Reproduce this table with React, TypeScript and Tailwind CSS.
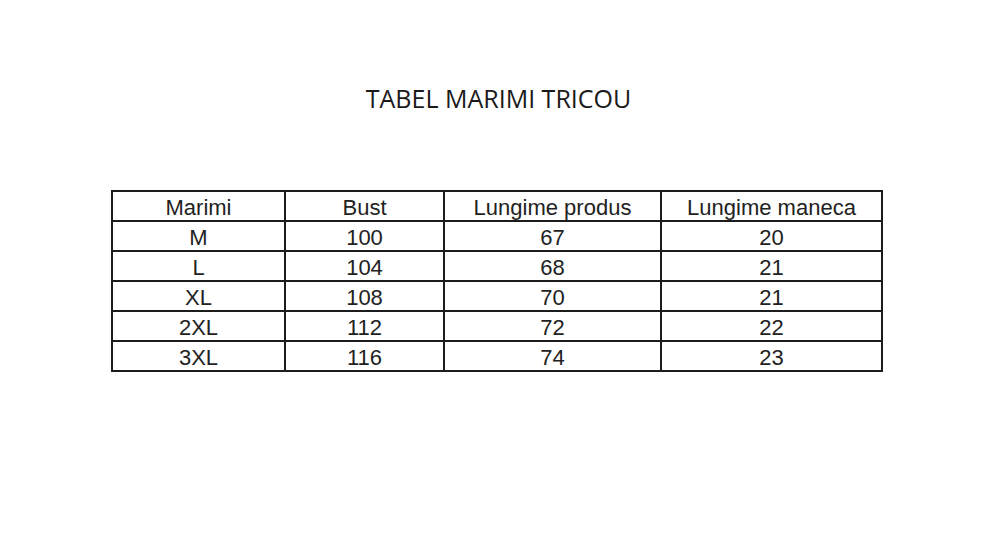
import React from "react";

const headers = ["Marimi", "Bust", "Lungime produs", "Lungime maneca"];
const rows = [
  ["M", "100", "67", "20"],
  ["L", "104", "68", "21"],
  ["XL", "108", "70", "21"],
  ["2XL", "112", "72", "22"],
  ["3XL", "116", "74", "23"],
];

export default function App() {
  const all = [headers, ...rows];
  return (
    <div className="w-[1000px] h-[533px] bg-white flex flex-col">
      <div
        className="h-[26px] mt-[85px] text-center text-[25px] leading-[26px] text-[#1a1a1a] pr-[3px]"
        style={{ fontFamily: '"Open Sans", "Noto Sans", sans-serif' }}
      >
        TABEL MARIMI TRICOU
      </div>
      <div className="mt-[79px] pl-[111px]">
        <div
          className="grid grid-cols-[173px_159px_217px_221px] w-[772px] border-l-2 border-t-2 border-[#1c1c1c] text-[22px] leading-[28px] text-[#222222]"
          style={{ fontFamily: '"Liberation Sans", Arial, sans-serif' }}
        >
          {all.map((r, i) =>
            r.map((c, j) => (
              <div
                key={`${i}-${j}`}
                className="h-[30px] border-r-2 border-b-2 border-[#1c1c1c] flex items-center justify-center pt-[3px]"
              >
                {c}
              </div>
            ))
          )}
        </div>
      </div>
    </div>
  );
}
